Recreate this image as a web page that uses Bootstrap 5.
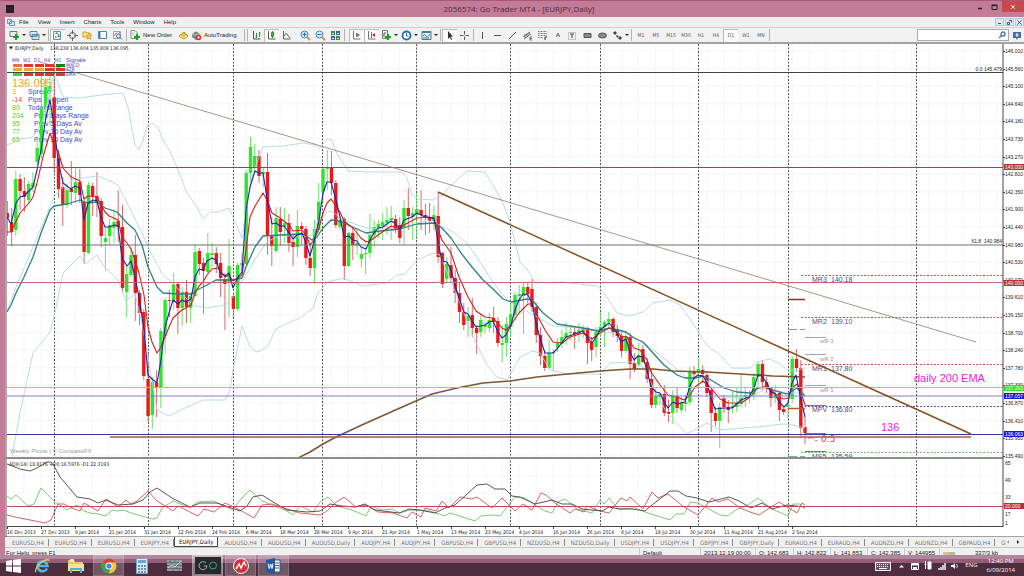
<!DOCTYPE html>
<html lang="en">
<head>
<meta charset="utf-8">
<meta name="viewport" content="width=device-width, initial-scale=1">
<title>2056574: Go Trader MT4 - [EURJPY,Daily]</title>
<link rel="stylesheet" href="https://cdn.jsdelivr.net/npm/bootstrap@5.3.0/dist/css/bootstrap.min.css">
<style>
:root{--pink:#c47b97;--face:#f0f0f0;--ui:"Liberation Sans",Arial,sans-serif;--tah:"DejaVu Sans Condensed","DejaVu Sans",sans-serif}
body{background:var(--pink);font-family:var(--ui);font-size:6px;line-height:8px;color:#222;overflow-x:hidden}
button{border:0;background:none;padding:0;color:inherit;font:inherit;line-height:inherit}
svg{display:block}
.titlebar{height:17px;border-top:1px solid #a5587a;background:var(--pink)}
.titlebar h1{font:8px/16px "Open Sans",sans-serif;color:#4a2c3a;margin:0}
.appicon{width:8px;height:8px;background:#262226;margin-left:6px}
.winbtns{height:16px}
.winbtns button{width:15px;height:11px;display:flex;align-items:center;justify-content:center}
.winbtns .closer{width:22px;background:#c9484b}
.shell{margin-left:5px}
.menubar{height:10px;background:var(--face);line-height:10px}
.menubar button{margin-right:9px}
.mdi button{width:9px;height:8px;background:#dce8f4;border:1px solid #b5c8dc;margin:0 0 0 1px;display:flex;align-items:center;justify-content:center}
.toolbar{height:17px;background:#f1f1f1;border-top:1px solid #cfcfcf;border-bottom:2px solid #a2a2a2;padding-left:2px}
.toolbar button{width:15px;height:13px;display:flex;align-items:center;justify-content:center;flex:none;color:#555}
.toolbar .withdrop{width:20px;justify-content:flex-start;padding-left:2px;gap:2px}
.toolbar .withdrop::after{content:"";border:2px solid transparent;border-top-color:#222;border-bottom:0}
.toolbar .pressed{background:#fafafa;box-shadow:inset 1px 1px #bbb}
.toolbar .wide{width:auto;gap:2px;color:#222}
.toolbar .tf{font:5px/13px var(--tah)}
.divide{width:1px;height:12px;background:#b4b4b4;margin:0 1px;flex:none}
.searchbox{width:92px;height:12px;border:1px solid #aaa;background:#fff}
.searchbox input{border:0;width:80px;height:8px;font-size:6px;padding:0 2px;outline:0}
.chartwrap{background:#fff}
.chartwrap svg{width:100%;height:auto}
.tabrow{height:11px;background:var(--face);border-bottom:1px solid #c8c8c8;font:6px/9px var(--tah)}
.tabs{height:10px;overflow:hidden;padding-left:1px;min-width:0}
.tabs button{flex:none;padding:0 5px 0 6px;height:10px;color:#777;border:0;position:relative}
.tabs button::after{content:"";position:absolute;right:0;top:2px;width:1px;height:7px;background:#888}
.tabs button:last-child::after{display:none}
.tabs .on{background:#fff;color:#111;border:1px solid #444;border-top:0;padding:0 4px}
.tabs .on::after{display:none}
.tabnav{width:18px}
.statusbar{height:7px;background:var(--face);overflow:hidden;padding-left:1px;line-height:11px}
.statusbar span{white-space:nowrap;border-left:1px solid #ccc;padding-left:3px;flex:none}
.taskbar{height:21px;background:linear-gradient(#b0869b 0 4px,#935c77 4px 8px,#4d2d3e 8px)}
.taskbar button{width:31px;height:21px;margin-right:2px;display:flex;align-items:center;justify-content:center;flex:none}
.taskbar .start{width:27px;margin-right:0}
.taskbar .open{background:rgba(255,255,255,.2);box-shadow:inset 0 0 0 1px rgba(255,255,255,.15)}
.taskbar .front{background:rgba(255,255,255,.38)}
.tray{color:#fff;font:6px/9px "Open Sans",sans-serif;padding-right:9px}
.s5{font:5px var(--tah)}.a5{font:5px var(--ui)}.s6{font:6px var(--ui)}.s7{font:7px var(--ui)}.s11{font:11px var(--ui)}
</style>
</head>
<body>
<header class="titlebar d-flex align-items-center position-relative">
  <div class="appicon"></div>
  <h1 class="flex-fill text-center">2056574: Go Trader MT4 - [EURJPY,Daily]</h1>
  <div class="winbtns d-flex position-absolute top-0 end-0">
    <button aria-label="Minimize"><svg width="6" height="6"><path d="M1 4.500h4" stroke="#222" stroke-width="1.500"/></svg></button>
    <button aria-label="Restore"><svg width="7" height="6"><path d="M1 1.500h5v4H1z" fill="none" stroke="#222"/><path d="M.5 1h6" stroke="#222"/></svg></button>
    <button class="closer" aria-label="Close"><svg width="6" height="6"><path d="M1 1l4 4M5 1L1 5" stroke="#fff"/></svg></button>
  </div>
</header>
<div class="shell">
<nav class="menubar d-flex align-items-center">
  <svg width="8" height="8" style="margin:0 4px 0 2px"><path d="M.5 1.500h4v4h-4zM2.500 3.500h5v4h-5z" fill="#e5f1fa" stroke="#5d95bf"/></svg>
  <button>File</button><button>View</button><button>Insert</button><button>Charts</button><button>Tools</button><button>Window</button><button>Help</button>
  <div class="mdi d-flex ms-auto">
    <button style="margin-right:0" aria-label="Minimize chart"><svg width="5" height="5"><path d="M1 3.500h3" stroke="#456"/></svg></button>
    <button aria-label="Restore chart"><svg width="5" height="5"><path d="M.5 2.500h2v2h-2zM2 .5h2.500v2" fill="none" stroke="#456"/></svg></button>
    <button aria-label="Close chart"><svg width="5" height="5"><path d="M.5 .5l4 4M4.500 .5l-4 4" stroke="#456"/></svg></button>
  </div>
</nav>
<div class="toolbar d-flex align-items-center">
  <button class="withdrop" aria-label="New chart"><svg width="11" height="11"><path d="M1 1.500h7v5H1z" fill="#eee" stroke="#678"/><path d="M7 4v6M4 7h6" stroke="#1ca321" stroke-width="2.200"/></svg></button>
  <button class="withdrop" aria-label="Profiles"><svg width="11" height="11"><path d="M1 1.500h7v5H1zM3 4.500h7v5H3z" fill="#dbeaf5" stroke="#5484aa"/><path d="M3 5h7" stroke="#5484aa"/></svg></button>
  <i class="divide"></i>
  <button class="pressed" aria-label="Market watch"><svg width="11" height="11"><path d="M1.500 1.500h7v8h-7z" fill="#e9f3fb" stroke="#5b90b9"/><path d="M3 4l2-2 1 2zM5 7l2-2 1 2z" fill="#1d9e3a"/><path d="M6 4l2 1-2 1zM3 6l2 1-2 1z" fill="#d75a24"/></svg></button>
  <button aria-label="Data window"><svg width="11" height="11" fill="none" stroke="#666"><circle cx="5.500" cy="5.500" r="3"/><path d="M5.500 0v4M5.500 7v4M0 5.500h4M7 5.500h4"/></svg></button>
  <button aria-label="Navigator"><svg width="11" height="11"><path d="M1 2h3l1 1h3v4H1z" fill="#f9e795" stroke="#c5a12e"/><path d="M7 3l1 2 2 .3-1.500 1.500.5 2.500-2-1-2 1 .3-2.500L4 5.500 6 5z" fill="#f6c93c" stroke="#bb901c" stroke-width=".6"/></svg></button>
  <button aria-label="Terminal"><svg width="11" height="11"><path d="M1.500 1.500h8v7h-8z" fill="#fff" stroke="#4f84bb"/><path d="M2.500 2v6" stroke="#4f84bb" stroke-width="2"/></svg></button>
  <button aria-label="Strategy tester"><svg width="11" height="11"><path d="M1.500 1.500h7v7h-7z" fill="#eef2f5" stroke="#9ab"/><path d="M2 6l2-3 2 2 2-3" fill="none" stroke="#c77"/><circle cx="6.500" cy="6" r="2" fill="#cfe5f4" stroke="#578"/><path d="M8 7.500l2 2" stroke="#578"/></svg></button>
  <i class="divide"></i>
  <button class="wide" aria-label="New Order"><svg width="13" height="11"><path d="M3 .5h4l2 2v6H3z" fill="#fff" stroke="#888"/><path d="M4 3h3M4 5h3" stroke="#888" stroke-width=".6"/><path d="M9 4v6M6 7h6" stroke="#1ca321" stroke-width="2.200"/></svg>New Order</button>
  <button class="ms-1" aria-label="MetaEditor"><svg width="11" height="11"><path d="M1 6l5-4 4 4-4 3z" fill="#f1b932" stroke="#a87912" stroke-width=".8"/><path d="M2 6l4 1.500L9 6" fill="none" stroke="#fff0a8"/></svg></button>
  <button class="wide"><svg width="11" height="11"><path d="M1 5q4-7 8 0v3l-4 2-4-3z" fill="#4b8ec6"/><path d="M1 4q4 2 8 0" stroke="#e9b23a" stroke-width="1.500" fill="none"/><circle cx="7.500" cy="7.500" r="2.800" fill="#d63222"/><path d="M6.500 6.500h2v2h-2z" fill="#fff"/></svg>AutoTrading</button>
  <i class="divide ms-2"></i><i class="divide"></i>
  <button aria-label="Bar chart"><svg width="11" height="11" fill="none" stroke="#555"><path d="M2.500 1v8h7"/><path d="M5.500 3v5M4.500 7h1M8.500 2v5M8.500 3h1" stroke="#2c8c3c"/></svg></button>
  <button class="pressed" aria-label="Candlesticks"><svg width="11" height="11" fill="none" stroke="#555"><path d="M2.500 1v8h7"/><path d="M6.500 1v7" stroke="#2c8c3c"/><path d="M5.500 2.500h2v4h-2z" fill="#48b650" stroke="#2c8c3c"/></svg></button>
  <button aria-label="Line chart"><svg width="11" height="11" fill="none" stroke="#666"><path d="M2.500 1v8h7M3 6q2-4 3-2t3 4"/></svg></button>
  <button aria-label="Zoom in" class="ms-1"><svg width="11" height="11"><circle cx="4.500" cy="4.500" r="3.500" fill="#d7ebf9" stroke="#4789bd"/><path d="M7 7l3 3" stroke="#c49a3b" stroke-width="1.800"/><path d="M2.500 4.500h4M4.500 2.500v4" stroke="#286da5"/></svg></button>
  <button aria-label="Zoom out"><svg width="11" height="11"><circle cx="4.500" cy="4.500" r="3.500" fill="#d7ebf9" stroke="#4789bd"/><path d="M7 7l3 3" stroke="#c49a3b" stroke-width="1.800"/><path d="M2.500 4.500h4" stroke="#286da5"/></svg></button>
  <button aria-label="Tile windows"><svg width="11" height="11"><path d="M1 1h4v4H1zM6 6h4v4H6z" fill="#37913a"/><path d="M6 1h4v4H6zM1 6h4v4H1z" fill="#31659b"/><path d="M2 3h2v1H2zM7 3h2v1H7zM2 8h2v1H2zM7 8h2v1H7z" fill="#fff"/></svg></button>
  <i class="divide me-1"></i>
  <button class="pressed" aria-label="Auto scroll"><svg width="11" height="11" fill="none" stroke="#777"><path d="M2.500 1v8h7M5.500 3v4"/><path d="M6 3l3 2-3 2z" fill="#2c9c3c" stroke="none"/></svg></button>
  <button class="pressed" aria-label="Chart shift"><svg width="11" height="11" fill="none" stroke="#777"><path d="M2.500 1v8h7M5.500 2v6"/><path d="M9 3L6 5l3 2z" fill="#b33" stroke="none"/></svg></button>
  <button class="withdrop" aria-label="Indicators"><svg width="11" height="11"><path d="M1.500.5h5v8h-5z" fill="#f5f5f5" stroke="#777"/><path d="M3 7V3h2" fill="none" stroke="#555"/><path d="M7 4v6M4 7h6" stroke="#1ca321" stroke-width="2.200"/></svg></button>
  <button class="withdrop" aria-label="Periods"><svg width="11" height="11"><circle cx="5.500" cy="5.500" r="4" fill="#fff" stroke="#2070b5" stroke-width="1.800"/><path d="M5.500 3v3h2" fill="none" stroke="#333" stroke-width=".8"/></svg></button>
  <button class="withdrop" aria-label="Templates"><svg width="11" height="11"><path d="M1 1.500h9v8H1z" fill="#e6f2fa" stroke="#48799e"/><path d="M1 2.500h9" stroke="#48799e"/><path d="M2 6q2-3 3 0t4-2M2 8h6" fill="none" stroke="#388a4c"/></svg></button>
  <i class="divide"></i>
  <button class="pressed" aria-label="Cursor"><svg width="11" height="11"><path d="M4 1v8l2-2 1 3 1-.5-1-3h2z" fill="#333"/></svg></button>
  <button aria-label="Crosshair"><svg width="11" height="11"><path d="M5.500 1v3.500M5.500 6.500V10M1 5.500h3.500M6.500 5.500H10" stroke="#555"/></svg></button>
  <i class="divide"></i>
  <button aria-label="Vertical line"><svg width="11" height="11"><path d="M5.500 2v7" stroke="#555"/></svg></button>
  <button aria-label="Horizontal line"><svg width="11" height="11"><path d="M2 5.500h7" stroke="#555"/></svg></button>
  <button aria-label="Trendline"><svg width="11" height="11"><path d="M2 9l7-7" stroke="#555"/></svg></button>
  <button aria-label="Channel"><svg width="11" height="11" stroke="#555" fill="none"><path d="M1 7l7-5M2 9l7-5M3 4v4M5 3v4M7 2v3M10 7H8v3h2M8 8.500h2" stroke-width=".8"/></svg></button>
  <button aria-label="Fibonacci"><svg width="11" height="11" stroke="#777"><path d="M1 1.500h9M1 3.500h9M1 5.500h9M1 7.500h5" stroke-dasharray="1 .5"/><path d="M8 10V7h2" fill="none" stroke="#333"/></svg></button>
  <button aria-label="Text" class="fw-bold">A</button>
  <button aria-label="Label"><svg width="11" height="11"><path d="M1.500 2.500h7v7h-7z" fill="none" stroke="#999" stroke-dasharray="1"/><path d="M3 4h4M5 4v4" stroke="#444"/></svg></button>
  <button aria-label="Rectangle"><svg width="11" height="11"><path d="M2 3.500h7v4H2z" fill="#888" stroke="#555"/></svg></button>
  <button aria-label="Ellipse"><svg width="11" height="11"><ellipse cx="5.500" cy="5.500" rx="4" ry="2.500" fill="#888" stroke="#555"/></svg></button>
  <button class="withdrop" aria-label="Arrows"><svg width="11" height="11" fill="#444"><path d="M1 3l2-2 2 2-2 2zM6 8l2-2 2 2-2 2zM4 5l3 1-2 2z"/></svg></button>
  <i class="divide"></i>
  <button class="tf">M1</button><button class="tf">M5</button><button class="tf">M15</button><button class="tf">M30</button><button class="tf">H1</button><button class="tf">H4</button><button class="tf pressed">D1</button><button class="tf">W1</button><button class="tf">MN</button>
  <i class="divide"></i>
  <label class="searchbox d-flex align-items-center ms-auto"><input type="text" aria-label="Search"><svg width="8" height="8"><circle cx="5" cy="3" r="2" fill="none" stroke="#3975b5" stroke-width="1.300"/><path d="M3.500 4.500L1 7" stroke="#3975b5" stroke-width="1.300"/></svg></label>
  <button aria-label="Messages"><svg width="10" height="9"><path d="M1 1h8v6H6L5 9 4 7H1z" fill="#4c6b9d"/><path d="M5 2v4M3.500 4h3" stroke="#fff"/></svg></button>
</div>
<main class="chartwrap">
<svg viewBox="5 44 1019 493" role="img" aria-label="EURJPY daily chart">
  <defs><clipPath id="pane"><path d="M7 44h996v413H7z"/></clipPath></defs>
  <g id="grid" stroke="#f5f5f2" stroke-width="1"></g>
  <g id="months" stroke="#555" stroke-dasharray="2 1.500"></g>
  <text class="s11" x="12" y="87" fill="#eda52e">136.095</text>
  <g class="s7" fill="#4b44c6"><text x="28" y="94">Spread</text><text x="28" y="102">Pips to Open</text><text x="28" y="110">Todays Range</text><text x="34" y="118">Prev Days Range</text><text x="34" y="126">Prev 5 Days Av</text><text x="34" y="134">Prev 10 Day Av</text><text x="34" y="142">Prev 30 Day Av</text></g>
  <g class="s7" fill="#42cf46"><text x="12" y="94" fill="#e3a64a">3</text><text x="12" y="102" fill="#dd4c30">-14</text><text x="12" y="110">80</text><text x="12" y="118">204</text><text x="12" y="126">95</text><text x="12" y="134">77</text><text x="12" y="142">65</text></g>
  <g clip-path="url(#pane)">
    <g id="candles"></g>
    <g id="curves" fill="none" stroke-linejoin="round"></g>
    <g fill="none">
      <path d="M7 72.500h996" stroke="#444"/><path d="M7 167.500h996" stroke="#a0404f"/><path d="M7 245h996" stroke="#707070"/>
      <path d="M7 282.500h996" stroke="#bd6a78"/><path d="M7 387.500h996" stroke="#6ce66c"/><path d="M7 396h996" stroke="#8080c4"/>
      <path d="M7 434.500h996" stroke="#3a3a9a"/><path d="M110 437h861" stroke="#a2623c" stroke-width="1.500"/>
      <path d="M40 62L976 342" stroke="#927c68" stroke-width=".8"/><path d="M438 192l533 242" stroke="#84501f" stroke-width="1.500"/>
      <path d="M801 275.500h202M801 317.500h202M801 364.500h202" stroke="#c94c57" stroke-dasharray="2 1.500"/>
      <path d="M801 406.500h202" stroke="#6a4a9c" stroke-dasharray="2 1.500"/><path d="M801 452.500h202" stroke="#6db96d" stroke-dasharray="2 1.500"/>
      <path d="M805 337.500h21M805 354.500h21M805 385.500h21" stroke="#8da6d2"/><path d="M805 433.500h21M805 451.500h21M805 405.500h21" stroke="#8a62b4"/>
      <path d="M788 299.500h17" stroke="#7a3530" stroke-width="1.500"/><path d="M788 329.500h9M800 329.500h5" stroke="#a982ad"/>
      <path d="M788 408.500h17" stroke="#c05a20" stroke-width="1.500"/><path d="M788 457h9M800 457h5" stroke="#063"/>
    </g>
    <g class="s7" fill="#4b4b86">
      <text x="812" y="282">MR3</text><text x="831" y="282">140.18</text><text x="812" y="324">MR2</text><text x="831" y="324">139.10</text>
      <text x="812" y="371">MR1</text><text x="831" y="371">137.80</text><text x="812" y="412">MPV</text><text x="831" y="412">136.80</text>
      <text x="812" y="459">MS5</text><text x="831" y="459">135.59</text>
    </g>
    <g class="s6" fill="#999"><text x="820" y="343">wR 3</text><text x="820" y="361">wR 2</text><text x="820" y="392">wR 1</text>
      <text x="10" y="453">Weekly Pivots | © CompassFX</text>
    </g>
    <g fill="#d8433c" style="font:9px 'DejaVu Sans',sans-serif"><text x="807" y="443">^-</text><text x="821" y="442">0:5</text></g>
    <g class="s11" fill="#ee22dd"><text x="914" y="382">daily 200 EMA</text><text x="881" y="431">136</text></g>
    <g class="s5" fill="#222"><path d="M9 46.500h4l-2 3z"/><text x="15" y="50">EURJPY,Daily</text><text x="50" y="50">136.238 136.604 135.808 136.095</text></g>
    <g class="a5" fill="#222"><text x="1002" y="71" text-anchor="end">0.0 145.479</text><text x="1002" y="243" text-anchor="end">61.8&#160; 140.984</text></g>
    <g class="s5" fill="#4340c8"><text x="12" y="62">MN</text><text x="23" y="62">W1</text><text x="34" y="62">D1</text><text x="44" y="62">H4</text><text x="55" y="62">H1</text>
      <text x="66" y="62" class="s6">Signals</text><text x="66" y="67">MACD</text><text x="66" y="71">STR</text><text x="66" y="76">EMA</text></g>
    <path d="M13 64h9v3h-9z" fill="#ee6a50"/><path d="M24 64h9v3h-9zM35 64h9v3h-9zM45 64h9v3h-9zM45 68h9v3h-9zM56 68h9v3h-9zM24 73h9v3h-9zM35 73h9v3h-9zM45 73h9v3h-9zM56 73h9v3h-9z" fill="#df3535"/>
    <path d="M56 64h9v3h-9z" fill="#168316"/><path d="M13 68h9v3h-9zM24 68h9v3h-9zM35 68h9v3h-9z" fill="#efa531"/><path d="M13 73h9v3h-9z" fill="#30dd38"/>
  </g>
  <g id="adx" fill="none" stroke-width=".9"></g>
  <path d="M7 506.500h996" stroke="#bd4a55"/>
  <text x="9" y="466" class="s5" fill="#222">ADX(14) 18.8176 +D0:16.5976 -D1:22.3193</text>
  <path d="M5 44h2v493H5z" fill="#a9a9a9"/><path d="M5 457h998v2H5z" fill="#8c8c8c"/>
  <path d="M7 526.500h996M1003 44v483M5 537h1019" stroke="#444" fill="none"/>
  <g id="axes" class="a5" fill="#222"></g>
</svg>
</main>
<div class="tabrow d-flex">
  <div class="tabs d-flex flex-fill" id="tabs"></div>
  <div class="tabnav d-flex flex-none justify-content-between align-items-center pe-1">
    <button aria-label="Previous tabs"><svg width="4" height="6"><path d="M3 1v4L1 3z" fill="#999"/></svg></button>
    <button aria-label="Next tabs"><svg width="4" height="6"><path d="M1 1v4l2-2z" fill="#111"/></svg></button>
  </div>
</div>
<footer class="statusbar d-flex">
  <div class="flex-fill">For Help, press F1</div>
  <span style="width:61px">Default</span><span style="width:55px">2013.12.19 00:00</span><span style="width:38px">O: 142.683</span><span style="width:37px">H: 142.822</span><span style="width:37px">L: 141.853</span><span style="width:37px">C: 142.385</span><span style="width:35px">V: 144955</span>
  <span><svg width="12" height="7" class="mt-1"><path d="M1 0v7M3 0v7M5 0v7" stroke="#b84" /><path d="M7 0v7M9 0v7M11 0v7" stroke="#692"/></svg></span><span class="border-0" style="width:69px;padding-left:20px">337/3 kb</span>
</footer>
</div>
<div class="taskbar d-flex">
  <button class="start" aria-label="Start"><svg width="15" height="14" fill="#fff"><path d="M0 2l6-1v5.500H0zM7 .8L15 0v6.500H7zM0 7.500h6V13l-6-1zM7 7.500h8V14l-8-1z"/></svg></button>
  <button aria-label="Internet Explorer"><svg width="17" height="16" fill="none"><path d="M13 10.500A5 5 0 1 1 13.500 8H4" stroke="#49b8ee" stroke-width="2.600"/><path d="M2 14C-1 11 11-1 15.500 2.500" stroke="#f1c544" stroke-width="1.300"/></svg></button>
  <button aria-label="Explorer"><svg width="18" height="16"><path d="M1 2h6l1 2h8v9H1z" fill="#e9c765"/><path d="M3 1h4v3H3z" fill="#f9eeb6"/><path d="M1 6h16v7H1z" fill="#f8e398"/><path d="M4 15v-4h10v4" fill="none" stroke="#57a9d9" stroke-width="2"/></svg></button>
  <button class="open" aria-label="Chrome"><svg width="16" height="16" viewBox="0 0 16 16"><circle cx="8" cy="8" r="7.500" fill="#f2c62f"/><path d="M8 8L1.500 4.200A7.500 7.500 0 0 1 14.500 4.500H8z" fill="#dc4437"/><path d="M8 8L1.500 4.200A7.500 7.500 0 0 0 7.500 15.500L10.500 9z" fill="#37a352"/><circle cx="8" cy="8" r="3.500" fill="#fff"/><circle cx="8" cy="8" r="2.600" fill="#4384e8"/></svg></button>
  <button aria-label="Calculator"><svg width="12" height="16"><path d="M.5.5h11v15H.5z" fill="#dbe9f5" stroke="#7ba5cb"/><path d="M2 2h8v3H2z" fill="#67a4d7"/><path d="M2 8h8M2 11h8M2 14h8" stroke="#6292bd" stroke-width="2" stroke-dasharray="2 1"/></svg></button>
  <button aria-label="Stock tool"><svg width="15" height="13"><path d="M0 1h15v11H0z" fill="#909da3"/><path d="M0 3.500h15M0 6.500h15M0 9.500h15M3 1v3M8 1v3M12 4v3M5 4v3M3 7v3M9 7v3M6 10v2M12 10v2" stroke="#5f5d66" stroke-width=".8"/><path d="M1 9l4-3 3 2 6-6" fill="none" stroke="#e5e5e5" stroke-width=".8"/></svg></button>
  <button class="open front" aria-label="Go Trader"><svg width="26" height="17"><path d="M0 0h26v17H0z" fill="#252a2b"/><path d="M11 6a4 4 0 1 0 1 3H9" fill="none" stroke="#a9adab"/><circle cx="18" cy="8.500" r="3.500" fill="none" stroke="#4c9b7e"/></svg></button>
  <button class="open" aria-label="MT4"><svg width="16" height="16"><circle cx="8" cy="8" r="7.500" fill="#d62e3d" stroke="#fff"/><path d="M3 11l3-5 2 4 3-6 2 4" fill="none" stroke="#fff" stroke-width="1.500"/></svg></button>
  <button class="open" aria-label="Word"><svg width="15" height="16"><path d="M6 2h8v12H6z" fill="#fff" stroke="#2d5b9d"/><path d="M9 5h4M9 7.500h4M9 10h4" stroke="#2d5b9d"/><path d="M0 2l9-2v16l-9-2z" fill="#2a5699"/><path d="M2 5.500l1.200 5L4.700 6l1.300 4.500L7 5.500" fill="none" stroke="#fff"/></svg></button>
  <div class="tray d-flex align-items-center ms-auto">
    <svg width="16" height="10" style="margin-right:8px"><path d="M.5 1.500h15v8H.5z" fill="#6d5162" stroke="#fff"/><path d="M2 3.500h12M2 5.500h12" stroke="#fff" stroke-dasharray="1 1"/><path d="M4 7.500h8" stroke="#fff"/></svg>
    <svg width="5" height="4" style="margin-right:7px"><path d="M0 3.500L2.500 1 5 3.500z" fill="#fff"/></svg>
    <svg width="8" height="8" style="margin-right:5px"><path d="M.5 1.500h7v6h-7z" fill="none" stroke="#fff"/><path d="M1 2.500h6M2 6h4" stroke="#fff" stroke-width="2"/></svg>
    <svg width="8" height="9" style="margin-right:6px"><path d="M4 1h3v7H4z" fill="#fff" stroke="#fff"/><path d="M1.500 0v3M.5 3.500h2M1.500 4v4" stroke="#fff"/></svg>
    <svg width="8" height="8" style="margin-right:5px"><path d="M1 8V6M3 8V5M5 8V3M7 8V1" stroke="#fff" stroke-width="1.400"/></svg>
    <svg width="8" height="8" style="margin-right:6px"><path d="M0 3h2l2-2v6L2 5H0z" fill="#fff"/><path d="M5.500 2q2 2 0 4" stroke="#ddd" fill="none"/></svg>
    <span style="margin-right:9px">ENG</span>
    <div class="text-center">12:40 PM<br>6/09/2014</div>
  </div>
</div>
<script src="https://cdn.jsdelivr.net/npm/bootstrap@5.3.0/dist/js/bootstrap.bundle.min.js"></script>
<script>
// One entry per day: direction, high, body top, body bottom, low (chart units)
const days = `r201,213,218,236 r208,222,232,246 g171,179,230,236 r174,179,191,210 r177,191,197,212 g181,184,200,203 g172,183,187,192 g138,148,162,165 g75,108,154,158 g78,87,108,120 g74,86,92,125 r62,98,158,173 r150,158,189,198 r177,187,205,226 g185,190,205,208 r161,189,192,205 g167,182,193,203 r169,182,195,203 r197,202,252,264 g182,185,253,254
r183,186,196,216 r172,196,202,217 r198,201,236,247 g227,238,242,271 g219,225,236,245 g210,222,228,243 r190,221,227,242 r205,227,288,293 g265,274,292,317 g247,255,275,277 r235,255,293,321 r290,293,313,325 r309,312,376,380 r353,379,416,422 g377,382,415,429 r370,383,388,417 g328,331,388,408 g298,300,336,353 r290,300,301,317 g273,284,302,310
r283,284,308,334 g287,292,308,326 r280,292,307,323 g292,296,308,323 g244,252,296,297 r248,251,264,275 r258,263,271,314 g233,253,272,273 g243,253,255,267 r247,253,264,273 r253,263,278,297 r273,279,284,330 g239,266,283,317 r293,296,309,317 g263,265,309,311 g253,263,265,275 g170,173,264,267 g137,147,173,182 g144,156,167,173 r150,156,176,183
g168,172,174,187 r153,172,235,255 r217,235,246,266 g207,218,251,253 r207,219,232,246 g208,223,227,243 r214,223,243,252 r233,242,247,266 g210,226,247,257 r222,226,229,245 r226,229,258,265 r243,258,268,276 g220,229,268,284 g183,202,230,233 g168,169,192,203 g150,167,169,190 r151,167,183,195 r180,183,225,228 g217,220,227,230 r217,219,266,280
g232,233,266,267 r227,233,245,260 g228,243,246,255 g248,254,259,267 g248,253,254,274 g214,235,253,258 g220,227,235,247 g220,224,228,238 g213,222,226,240 g207,220,223,235 g206,218,220,240 r215,219,230,233 r217,225,238,243 g200,208,228,245 r188,208,216,230 g207,213,217,240 g193,209,215,237 r190,210,215,230 r204,215,217,235 r203,217,221,233
g206,215,221,230 r192,216,257,263 r252,253,284,288 g257,264,279,283 r247,265,278,283 r270,278,293,303 r283,293,312,323 r303,312,325,330 g307,316,321,337 r298,315,328,337 r325,328,333,354 g315,320,332,337 g322,325,327,333 g313,320,328,332 r307,318,322,333 r317,321,343,347 g325,343,345,362 g317,324,343,357 g303,314,327,337 g292,295,315,320
g285,294,296,313 g283,287,296,334 r283,287,294,303 r279,289,307,312 r303,307,335,343 r327,335,356,365 r350,356,368,371 g340,353,368,370 g349,352,353,371 g338,343,348,352 g330,337,344,348 g322,333,338,345 g327,332,333,340 r328,332,334,349 g323,330,334,342 g325,328,332,338 r327,328,343,364 r337,342,350,361 g327,332,347,357 g312,327,332,337
g320,322,327,347 g312,319,322,327 r317,319,333,337 r325,329,336,342 r332,336,351,357 g333,336,351,353 r333,337,364,379 r353,363,369,372 g343,355,365,367 r345,349,362,363 r358,362,379,383 r370,379,405,408 g389,396,405,408 g393,394,397,405 r385,394,413,416 r400,412,414,422 g390,396,413,424 r388,396,408,413 g397,402,410,413 g395,402,404,412
g367,372,402,405 r366,371,374,380 g358,369,373,388 r365,370,374,383 r372,375,393,397 r387,390,413,432 r407,413,421,426 g403,407,421,448 r395,398,407,413 r400,407,410,423 g390,406,408,413 g388,403,407,412 g375,398,404,407 g387,395,398,407 g390,396,397,403 g373,377,395,400 g362,364,377,387 r360,364,382,390 r377,382,388,393 r387,388,398,407
g385,395,398,403 r392,393,410,421 r407,409,412,415 g400,405,407,418 g356,359,399,403 r349,359,368,372 r360,368,428,438 r417,427,433,444`.split(/\s+/);
const $ = id => document.getElementById(id);
$('candles').innerHTML = days.map((d, i) => {
  const up = d[0] === 'g', [h, t, b, l] = d.slice(1).split(',').map(Number);
  const x = (7.3 + 4.266 * i).toFixed(1), c = up ? '#2ce52c' : '#e81a1a';
  return `<path d="M${x} ${h}V${l}" stroke="${up ? '#5fdf5f' : '#d06060'}" stroke-width=".9"/><path d="M${x} ${t}V${Math.max(b, t + 1)}" stroke="${c}" stroke-width="3.400"/>`;
}).join('');
const line = (pts, color, w) => `<polyline points="${pts}" stroke="${color}" stroke-width="${w}"/>`;
const upper = "7,145 12,143 20,139 33,137 43,120 54,75 58,83 63,97 80,98 100,95 123,93 128,107 135,145 139,150 143,140 147,126 153,123 158,127 163,140 170,151 180,175 187,193 197,207 203,219 210,212 218,212 229,208 242,238 246,210 253,173 263,147 283,146 303,143 315,145 320,148 327,139 332,140 336,152 348,171 370,172 402,172 407,178 412,195 418,199 433,200 443,195 448,188 455,182 460,177 467,171 485,172 493,185 503,203 510,222 520,262 527,269 535,283 563,282 587,285 598,286 607,297 617,313 630,316 643,312 653,303 670,300 680,305 687,315 696,328 703,340 711,349 718,353 732,368 750,368 757,362 770,359 780,364 787,370 797,370 805,368";
const middle = "7,311 16,287 33,247 54,197 63,187 75,179 97,176 110,181 118,185 128,205 142,233 152,255 163,275 173,283 183,295 193,305 207,308 225,305 233,297 243,280 256,258 267,242 280,235 303,237 313,235 318,220 328,211 333,212 343,220 367,228 400,229 427,220 440,225 453,232 467,243 480,262 493,282 503,295 512,303 537,317 553,326 580,328 600,332 627,333 650,347 670,363 687,378 703,377 723,398 750,397 767,388 787,393 805,393";
const lower = "12,456 20,413 33,353 42,342 50,332 54,317 63,273 80,256 85,264 97,255 103,265 118,280 126,301 135,294 142,323 148,357 157,410 169,416 183,409 203,400 225,400 230,390 233,370 242,326 250,347 256,352 260,351 267,347 276,329 290,322 300,318 313,308 318,292 328,282 343,278 363,286 387,283 397,275 405,274 417,260 433,253 440,255 460,303 473,337 487,365 497,377 507,380 513,370 520,357 532,351 540,353 550,370 567,374 600,374 610,363 633,362 643,367 657,395 667,413 687,434 698,428 707,423 720,430 757,427 783,424 793,425 805,428";
const ema200 = "298,458 310,452 323,444 336,437 364,424 400,408 432,394 457,388 483,383 510,381 537,377 557,375 600,371 630,369 653,369 673,371 707,372 740,374 773,376 805,377";
const teal = "7,312 11,305 16,293 24,277 33,257 41,233 50,210 54,206 67,204 80,200 88,203 97,202 105,208 117,212 127,223 135,230 142,245 148,267 157,287 163,293 180,294 192,294 197,290 207,285 216,280 233,280 242,278 246,267 255,247 263,236 280,235 303,234 312,240 317,237 323,228 331,220 340,221 348,225 366,233 380,231 400,229 417,224 435,223 442,228 451,238 461,253 472,267 483,280 493,289 503,299 511,302 527,299 533,301 543,313 557,324 583,328 598,331 610,328 626,332 634,338 643,342 653,353 664,365 677,375 685,378 695,378 703,376 711,380 724,388 737,392 750,393 758,388 765,387 773,390 787,394 797,388 805,396";
const slow = "7,232 11,232 20,213 29,203 33,197 37,183 43,157 50,133 54,145 58,151 63,168 71,177 80,181 84,199 88,196 97,197 105,212 109,216 118,220 122,237 127,243 131,249 135,260 139,273 144,295 148,327 152,342 157,353 161,347 165,337 169,327 173,318 182,310 191,305 195,293 199,286 203,282 207,275 212,269 218,268 225,277 229,275 233,281 242,275 246,250 250,217 255,206 263,193 267,200 272,213 280,218 289,225 293,231 302,230 306,235 310,245 314,240 319,228 323,213 327,203 331,199 340,212 344,221 353,228 361,238 366,242 370,241 378,235 391,226 400,229 404,225 417,218 429,217 434,219 438,230 442,240 451,253 459,277 468,297 476,311 485,317 493,318 502,328 506,330 511,325 519,313 528,304 532,304 536,313 545,330 553,342 562,343 570,337 583,333 592,339 600,333 609,328 617,332 621,336 627,337 634,348 640,350 647,360 651,372 660,385 668,395 677,397 684,400 690,395 695,387 703,381 711,388 720,399 728,403 741,403 749,398 758,388 764,387 771,390 779,397 784,399 788,398 792,388 797,384 801,393 805,405";
const fast = "7,217 11,224 16,203 20,197 24,196 33,187 37,170 41,150 46,117 50,100 54,125 58,160 63,183 71,189 75,186 80,188 84,220 88,203 93,200 97,201 101,217 105,227 109,227 115,225 118,226 122,258 127,266 131,261 135,277 139,297 144,330 148,375 152,379 157,383 161,360 165,327 169,313 173,300 178,304 182,300 186,302 191,299 195,277 199,269 203,270 207,261 212,258 216,260 220,272 225,276 229,273 233,288 238,277 242,272 246,210 250,187 255,171 259,173 263,173 267,198 272,224 276,223 280,226 284,226 289,233 293,239 297,235 302,233 306,243 310,256 314,242 319,220 323,193 327,182 331,182 336,200 340,217 344,237 349,236 353,240 357,241 361,247 366,249 370,240 374,233 378,228 383,227 391,221 395,223 400,229 404,220 412,217 417,213 425,217 434,218 438,242 442,261 447,262 451,270 455,285 459,298 464,312 468,314 472,321 476,327 485,325 489,322 493,321 498,332 502,338 506,335 511,325 515,310 519,300 523,294 528,295 532,303 536,323 540,338 545,353 553,353 557,349 566,337 575,334 583,331 587,337 592,343 596,337 600,330 609,323 613,328 617,333 621,342 626,339 630,352 634,360 638,356 643,357 647,370 651,387 656,392 660,393 664,402 668,408 673,402 677,404 685,402 690,386 694,378 698,375 703,376 707,383 711,398 715,409 724,408 732,408 741,400 749,397 754,388 758,375 761,375 767,383 771,392 775,394 779,402 784,407 788,403 792,383 796,375 801,400 805,417";
$('curves').innerHTML = [upper, middle, lower].map(p => line(p, '#b3d6e3', .9)).join('')
  + line(ema200, '#7d5530', 1.5) + line(teal, '#2f8080', 1.3) + line(slow, '#cc2020', 1.1) + line(fast, '#2222a8', 1.1);
const plusDI = "7,496 11,499 16,495 28,506 34,504 41,488 54,501 67,510 77,505 84,511 90,513 98,514 106,516 112,510 118,511 124,510 131,513 152,519 157,518 162,508 173,501 190,508 197,502 213,501 233,510 240,500 250,490 262,501 287,511 293,515 300,506 313,512 320,502 328,497 337,506 352,510 366,516 371,506 382,510 392,509 400,513 410,510 430,511 445,516 450,513 475,521 481,516 492,515 500,516 508,506 515,497 525,498 535,505 545,511 552,513 558,502 565,499 577,509 592,513 600,500 604,504 609,498 618,509 635,508 648,513 670,520 676,514 684,514 690,502 698,503 720,515 728,516 737,509 745,507 758,498 772,509 788,516 793,504 800,504 805,509";
const minusDI = "7,515 15,517 45,523 51,520 58,504 64,504 72,508 80,511 84,503 98,511 106,499 118,507 126,500 131,504 137,501 148,491 157,501 173,511 178,506 198,516 204,509 214,512 225,503 240,510 254,518 262,505 272,504 287,509 300,513 320,515 327,511 335,503 344,497 356,507 366,505 378,512 393,513 407,518 412,512 421,517 425,508 436,511 442,501 449,508 460,497 472,499 477,497 492,508 502,498 515,511 523,504 532,510 541,493 546,495 555,503 570,513 575,509 584,512 587,506 600,511 609,513 621,498 627,501 630,497 643,509 652,492 658,498 668,494 684,507 698,515 712,498 718,502 728,499 740,508 750,512 759,515 779,502 797,513 802,503 805,505";
const adxMain = "7,464 20,469 30,471 37,468 47,462 51,462 54,466 60,477 77,497 90,499 98,503 106,500 118,505 133,504 143,500 150,492 157,488 163,492 172,498 190,507 200,503 217,503 240,511 247,506 253,497 262,495 273,502 287,510 307,512 320,511 330,504 342,506 355,507 365,504 375,510 399,513 409,509 420,510 435,513 445,508 455,505 477,485 487,484 495,489 505,489 512,496 520,497 535,504 552,500 562,504 572,504 582,509 602,511 609,507 619,509 632,509 645,511 652,505 670,491 678,491 686,496 697,498 709,502 721,499 729,497 739,501 751,508 762,503 772,509 787,505 805,507";
$('adx').innerHTML = line(plusDI, '#6cc46c', .9) + line(minusDI, '#d85050', .9) + line(adxMain, '#444', .9);
let grid = '';
for (let x = 24; x < 1003; x += 17.07) grid += `<path d="M${x.toFixed(1)} 44V526"/>`;
for (let y = 51; y < 456; y += 17.6) grid += `<path d="M7 ${y.toFixed(1)}H1003"/>`;
[476, 493].forEach(y => grid += `<path d="M7 ${y}H1003"/>`);
$('grid').innerHTML = grid;
$('months').innerHTML = [54.5, 148.5, 233.5, 322.5, 416.5, 510.5, 600.5, 698.5, 788.5, 916.5].map(x => `<path d="M${x} 44V526"/>`).join('');
const dates = "16 Dec 2013|27 Dec 2013|9 Jan 2014|21 Jan 2014|31 Jan 2014|12 Feb 2014|24 Feb 2014|6 Mar 2014|18 Mar 2014|28 Mar 2014|9 Apr 2014|21 Apr 2014|1 May 2014|13 May 2014|23 May 2014|4 Jun 2014|16 Jun 2014|26 Jun 2014|8 Jul 2014|18 Jul 2014|30 Jul 2014|11 Aug 2014|21 Aug 2014|2 Sep 2014".split('|');
const prices = "146.010 145.560 145.100 144.640 144.180 143.730 143.270 142.810 142.350 141.900 141.440 140.980 140.530 140.070 139.610 139.150 138.700 138.240 137.780 137.330 136.870 136.410 135.950 135.490".split(' ');
const tags = [['143.000', 167, '#b8343c'], ['140.000', 283, '#b8343c'], ['137.203', 388, '#22e322'], ['137.057', 396, '#1818cc'], ['136.063', 434, '#1818cc'], ['20.000', 506, '#b8343c']];
$('axes').innerHTML =
  dates.map((t, i) => { const x = (7 + 34.13 * i).toFixed(0); return `<path d="M${x}.5 527v2" stroke="#444"/><text class="s5" x="${x}" y="534">${t}</text>`; }).join('')
  + prices.map((t, i) => { const y = Math.round(51 + 17.6 * i); return `<path d="M1003 ${y}.5h2" stroke="#444"/><text x="1005" y="${y + 2}">${t}</text>`; }).join('')
  + [['65', 465], ['49', 482], ['33', 499], ['17', 516], ['1', 525]].map(([t, y]) => `<text x="1005" y="${y}">${t}</text>`).join('')
  + tags.map(([t, y, c]) => `<path d="M1004 ${y - 3}h20v6h-20z" fill="${c}"/><text x="1005" y="${y + 2}" fill="#fff">${t}</text>`).join('');
const tabs = "EURUSD,H4|EURUSD,H4|EURUSD,H4|EURJPY,H4|EURJPY,Daily|AUDUSD,H4|AUDUSD,H4|AUDUSD,Daily|AUDJPY,H4|AUDJPY,H4|GBPUSD,H4|GBPUSD,H4|NZDUSD,H4|NZDUSD,Daily|USDJPY,H4|USDJPY,H4|GBPJPY,H4|GBPJPY,Daily|EURAUD,H4|EURAUD,H4|AUDNZD,H4|AUDNZD,H4|GBPAUD,H4|GBP".split('|');
$('tabs').innerHTML = tabs.map((t, i) => `<button${i === 4 ? ' class="on"' : ''}>${t}</button>`).join('');
</script>
</body>
</html>
